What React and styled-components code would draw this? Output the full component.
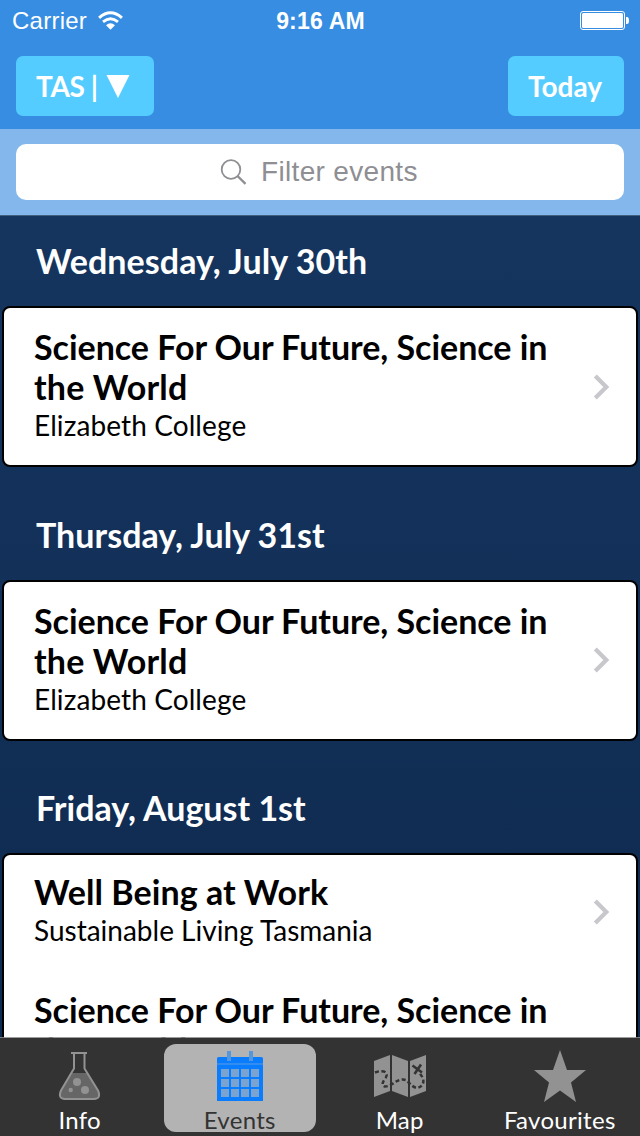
import React from "react";
import styled, { createGlobalStyle } from "styled-components";

const GlobalStyle = createGlobalStyle`
  * { box-sizing: border-box; }
  body { margin: 0; font-family: Lato, sans-serif; }
`;

const Screen = styled.div`
  width: 640px;
  height: 1136px;
  display: flex;
  flex-direction: column;
  overflow: hidden;
  background: linear-gradient(180deg, #15355f 215px, #0f2a50 1037px);
`;

const TopBar = styled.header`
  flex: none;
  height: 129px;
  background: #368de2;
  color: #fff;
`;

const StatusBar = styled.div`
  height: 40px;
  padding: 0 11px 0 12px;
  display: grid;
  grid-template-columns: 1fr auto 1fr;
  align-items: center;
  font-family: "Liberation Sans", Arial, sans-serif;
  font-size: 24px;
  line-height: 40px;
`;

const Carrier = styled.div`
  display: flex;
  align-items: center;
  gap: 11px;
  letter-spacing: 0.25px;
`;

const Clock = styled.div`
  font-weight: 700;
  font-size: 23px;
  padding-top: 1px;
  letter-spacing: 0.2px;
`;

const BatterySlot = styled.div`
  display: flex;
  justify-content: flex-end;
`;

const NavRow = styled.div`
  display: flex;
  justify-content: space-between;
  padding: 16px 16px 0;
`;

const NavButton = styled.button`
  width: ${(p) => p.$width}px;
  height: 60px;
  padding: 0 0 0 20px;
  display: flex;
  align-items: center;
  border: 0;
  border-radius: 7px;
  background: #55ccff;
  color: #fff;
  font: 700 28px/60px Lato, sans-serif;
  letter-spacing: ${(p) => p.$spacing || 0}px;

  svg { margin-left: 8.5px; }
`;

const SearchBar = styled.div`
  flex: none;
  height: 87px;
  padding: 15px 16px;
  background: #84b8ec;
  border-bottom: 1px solid #42607e;
`;

const SearchField = styled.div`
  height: 56px;
  display: flex;
  align-items: center;
  padding-left: 204px;
  gap: 14px;
  border-radius: 10px;
  background: #fff;
  color: #8e8e93;
  font: 28px/56px "Liberation Sans", Arial, sans-serif;
  letter-spacing: 0.33px;
`;

const EventList = styled.main`
  flex: 1;
  min-height: 0;
  margin-bottom: -1px;
  overflow: hidden;
`;

const Day = styled.section`
  height: 273.5px;
  &:first-child { margin-top: -22.5px; }
`;

const DayTitle = styled.h2`
  height: 112.5px;
  margin: 0;
  padding: 46.5px 36px 0;
  color: #fff;
  font-size: 34px;
  font-weight: 700;
  line-height: 42px;
  letter-spacing: ${(p) => p.$tracking}px;
`;

const Card = styled.div`
  margin: 0 2px;
  border: 2px solid #000;
  border-radius: 8px;
  background: #fff;
`;

const EventRow = styled.article`
  height: ${(p) => p.$height}px;
  padding: 19px 25px 0 30px;
  display: flex;
  justify-content: space-between;

  &:first-child:not(:last-child) { padding-top: 17px; }
  & + & { padding-top: 17px; }
  svg { margin-top: ${(p) => p.$height / 2 - 32}px; flex: none; }
`;

const EventTitle = styled.h3`
  margin: 0;
  font-size: 34px;
  font-weight: 700;
  line-height: 40px;
  width: 530px;
`;

const TitleLine = styled.span`
  display: block;
  letter-spacing: ${(p) => p.$tracking}px;
`;

const Venue = styled.p`
  margin: 0;
  font-size: 28px;
  line-height: 36px;
  letter-spacing: ${(p) => p.$tracking}px;
`;

const TabBar = styled.nav`
  position: relative;
  flex: none;
  height: 99px;
  border-top: 1px solid rgba(140, 140, 140, 0.85);
  background: #333;
  background-clip: padding-box;
  display: grid;
  grid-template-columns: repeat(4, 152px);
  column-gap: 8px;
  padding: 6px 4px 4px;
`;

const Tab = styled.a`
  height: 88px;
  display: flex;
  flex-direction: column;
  align-items: center;
  border-radius: 12px;
  background: ${(p) => (p.$active ? "#b3b3b3" : "transparent")};
  color: ${(p) => (p.$active ? "#333" : "#fff")};
  font-size: 24px;
  line-height: 30px;
  white-space: nowrap;
  letter-spacing: 0.3px;

  svg { display: block; flex: none; margin-bottom: 1px; }
`;

const TabLabel = styled.span`
  margin-left: -0.5px;
`;

const WifiIcon = () => (
  <svg width="26" height="20" viewBox="0 0 26 20" fill="none" stroke="#fff">
    <path d="M1.1 6.8 Q12.500 -3.2 23.900 6.8" strokeWidth="3" />
    <path d="M5 10.9 Q12.500 4.6 20 10.9" strokeWidth="2.8" />
    <path d="M8 14.2 Q12.500 10.4 17 14.2 L12.500 18.8Z" fill="#fff" stroke="none" />
  </svg>
);

const BatteryIcon = () => (
  <svg width="49" height="20" viewBox="0 0 49 20">
    <rect x="0.5" y="0.5" width="44" height="18" rx="2.5" fill="none" stroke="#fff" />
    <rect x="2" y="2" width="41" height="15" rx="1.5" fill="#fff" />
    <path d="M46 6h1q2 0 2 3.5t-2 3.5h-1z" fill="#fff" />
  </svg>
);

const DownIcon = () => (
  <svg width="24" height="24" viewBox="0 0 24 24">
    <path d="M0.5 1H23.500L12 24Z" fill="#fff" />
  </svg>
);

const SearchIcon = () => (
  <svg width="27" height="26" viewBox="0 0 27 26" fill="none" stroke="#8e8e93">
    <circle cx="11" cy="10.5" r="9.3" strokeWidth="1.8" />
    <path d="M17.5 17L25.5 24.8" strokeWidth="2.4" />
  </svg>
);

const Chevron = () => (
  <svg width="18" height="26" viewBox="0 0 18 26">
    <path d="M2.3 2L13.300 13L2.3 24" fill="none" stroke="#c7c7cc" strokeWidth="4.2" />
  </svg>
);

const FlaskIcon = () => (
  <svg width="52" height="60" viewBox="0 0 52 60">
    <path d="M16.500 29H34L43 46Q47 54 39 55H12Q4 54 7 46Z" fill="#666" />
    <path
      d="M20 9V24.500L7 46.500Q3.500 54.500 11 55H40Q47.500 54.500 44 46.500L30.500 24.500V9"
      fill="none" stroke="#929292" strokeWidth="2"
    />
    <path d="M17 9H33" stroke="#929292" strokeWidth="2" />
    <circle cx="23" cy="38" r="4" fill="#929292" />
    <circle cx="31" cy="46" r="4" fill="#929292" />
    <circle cx="16.700" cy="46" r="2.200" fill="#929292" />
  </svg>
);

const CalendarIcon = () => (
  <svg width="52" height="60" viewBox="0 0 52 60">
    <path d="M4.500 13H47.500Q49 13 49 14.500V57H3V14.500Q3 13 4.500 13Z" fill="#0a7dff" />
    <path d="M3 20H49" stroke="#338cf0" strokeWidth="2" />
    <g fill="#7ba3d0">
      {[25, 35, 45].map((y) =>
        [7, 17, 27, 37].map((x) => <rect key={`${x}-${y}`} x={x} y={y} width="8" height="8" />)
      )}
    </g>
    <path d="M15 7V17M37 7V17" stroke="#5697dc" strokeWidth="4" />
  </svg>
);

const MapIcon = () => (
  <svg width="52" height="60" viewBox="0 0 52 60">
    <path d="M0 17L16 11V47L0 53ZM18 11L34 17V53L18 47ZM36 17L52 11V47L36 53Z" fill="#929292" />
    <path
      d="M1 28.500Q6 26.500 10 27.500Q14.500 30 11.500 34Q6 41 11 42.500Q15 42.500 19 39.500Q27 33.500 33 36.500Q38 43 43 44Q51 42 49 34L45.500 29"
      fill="none" stroke="#333" strokeWidth="2.500" strokeDasharray="4 2.500"
    />
    <path d="M38.500 21.500L48 28.500M47 20.500L40.500 30" stroke="#333" strokeWidth="2.600" />
  </svg>
);

const StarIcon = () => (
  <svg width="52" height="60" viewBox="0 0 52 60">
    <path d="M26 6L33 26H52L37 38.500L42 58L26 46.500L10 58L15 38.500L0 26H19Z" fill="#929292" />
  </svg>
);

const future = {
  lines: [
    { text: "Science For Our Future, Science in", tracking: -0.03 },
    { text: "the World", tracking: 0.2 },
  ],
  venue: "Elizabeth College",
  venueTracking: 0.1,
  height: 157,
};

const wellBeing = {
  lines: [{ text: "Well Being at Work", tracking: 0.06 }],
  venue: "Sustainable Living Tasmania",
  venueTracking: 0,
  height: 118,
};

const days = [
  { date: "Wednesday, July 30th", tracking: 0.08, events: [future] },
  { date: "Thursday, July 31st", tracking: 0.03, events: [future] },
  { date: "Friday, August 1st", tracking: 0, events: [wellBeing, future] },
];

const tabs = [
  { label: "Info", Icon: FlaskIcon },
  { label: "Events", Icon: CalendarIcon, active: true },
  { label: "Map", Icon: MapIcon },
  { label: "Favourites", Icon: StarIcon },
];

export default function App() {
  return (
    <Screen>
      <GlobalStyle />
      <TopBar>
        <StatusBar>
          <Carrier>Carrier <WifiIcon /></Carrier>
          <Clock>9:16 AM</Clock>
          <BatterySlot><BatteryIcon /></BatterySlot>
        </StatusBar>
        <NavRow>
          <NavButton $width={138} $spacing={-0.4}>TAS | <DownIcon /></NavButton>
          <NavButton $width={116}>Today</NavButton>
        </NavRow>
      </TopBar>
      <SearchBar>
        <SearchField><SearchIcon />Filter events</SearchField>
      </SearchBar>
      <EventList>
        {days.map((day) => (
          <Day key={day.date}>
            <DayTitle $tracking={day.tracking}>{day.date}</DayTitle>
            <Card>
              {day.events.map((event) => (
                <EventRow key={event.venue} $height={event.height}>
                  <div>
                    <EventTitle>
                      {event.lines.map((line) => (
                        <TitleLine key={line.text} $tracking={line.tracking}>{line.text}</TitleLine>
                      ))}
                    </EventTitle>
                    <Venue $tracking={event.venueTracking}>{event.venue}</Venue>
                  </div>
                  <Chevron />
                </EventRow>
              ))}
            </Card>
          </Day>
        ))}
      </EventList>
      <TabBar>
        {tabs.map(({ label, Icon, active }) => (
          <Tab key={label} $active={active}>
            <Icon />
            <TabLabel>{label}</TabLabel>
          </Tab>
        ))}
      </TabBar>
    </Screen>
  );
}
